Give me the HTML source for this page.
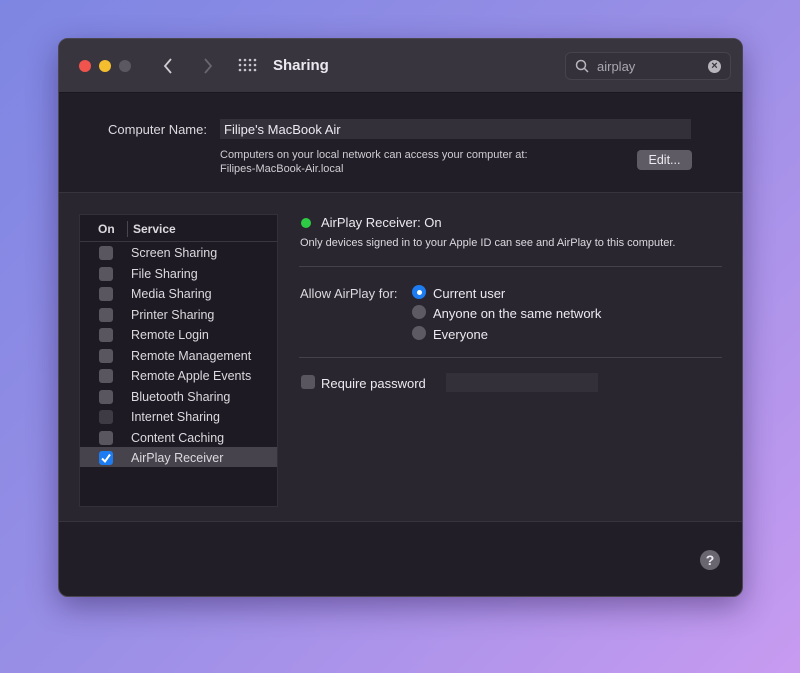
<!DOCTYPE html>
<html><head><style>
*{margin:0;padding:0;box-sizing:border-box}
body{width:800px;height:673px;overflow:hidden;font-family:"Liberation Sans",sans-serif;background:linear-gradient(135deg,#7d86e2 0%,#9a8fe6 50%,#c79bf0 100%);position:relative;color:#dcdadf}
.win{position:absolute;left:58px;top:38px;width:685px;height:559px;border-radius:10px;background:#221e28;overflow:hidden;box-shadow:0 10px 30px rgba(40,20,80,.45);border:1px solid #4a4650}
.tb{position:absolute;left:0;top:0;width:100%;height:54px;background:#39353f;border-bottom:1px solid #1a171e}
.dot{position:absolute;top:21px;width:12px;height:12px;border-radius:50%}
.abs{position:absolute}
.mid{position:absolute;left:0;top:153px;width:100%;height:330px;background:#2a2630;border-top:1px solid #38343d;border-bottom:1px solid #38343d}
.list{position:absolute;left:20px;top:21px;width:199px;height:293px;background:#1e1a23;border:1px solid #34303a}
.row{position:absolute;left:0;width:197px;height:20px;font-size:12.5px}
.cb{position:absolute;left:19px;top:4px;width:14px;height:14px;border-radius:3px;background:#5a5660}
.row span{position:absolute;left:51px;top:4px}
.rad{position:absolute;width:14px;height:14px;border-radius:50%;background:#5e5a64}
</style></head><body>
<div class="win">
 <div class="tb">
  <div class="dot" style="left:20px;background:#f0544c"></div>
  <div class="dot" style="left:40px;background:#f5be2e"></div>
  <div class="dot" style="left:60px;background:#5c5862"></div>
  <svg class="abs" style="left:103px;top:18px" width="12" height="18"><path d="M9 2L3 9l6 7" stroke="#cfcdd2" stroke-width="1.8" fill="none"/></svg>
  <svg class="abs" style="left:143px;top:18px" width="12" height="18"><path d="M3 2l6 7-6 7" stroke="#6a6670" stroke-width="1.8" fill="none"/></svg>
  <svg class="abs" style="left:179px;top:19px" width="20" height="16" fill="#c8c6cc"><circle cx="2" cy="2" r="1.3"/><circle cx="7" cy="2" r="1.3"/><circle cx="12" cy="2" r="1.3"/><circle cx="17" cy="2" r="1.3"/><circle cx="2" cy="7" r="1.3"/><circle cx="7" cy="7" r="1.3"/><circle cx="12" cy="7" r="1.3"/><circle cx="17" cy="7" r="1.3"/><circle cx="2" cy="12" r="1.3"/><circle cx="7" cy="12" r="1.3"/><circle cx="12" cy="12" r="1.3"/><circle cx="17" cy="12" r="1.3"/></svg>
  <div class="abs" style="left:214px;top:18px;font-size:15px;font-weight:bold;color:#eceaf0">Sharing</div>
  <div class="abs" style="left:506px;top:13px;width:166px;height:28px;border-radius:6px;background:#35313b;border:1px solid #47434d"></div>
  <svg class="abs" style="left:516px;top:20px" width="14" height="14"><circle cx="6" cy="6" r="4.5" stroke="#b8b6bc" stroke-width="1.5" fill="none"/><path d="M9.5 9.5L13 13" stroke="#b8b6bc" stroke-width="1.5"/></svg>
  <div class="abs" style="left:538px;top:20px;font-size:13px;color:#a9a7ae">airplay</div>
  <div class="abs" style="left:649px;top:21px;width:13px;height:13px;border-radius:50%;background:#b8b6bc;color:#39353f;font-size:11px;line-height:13px;text-align:center;font-weight:bold">×</div>
 </div>
 <div class="abs" style="left:49px;top:83px;font-size:13px;color:#dcdadf">Computer Name:</div>
 <div class="abs" style="left:161px;top:80px;width:471px;height:20px;background:#34303a"></div>
 <div class="abs" style="left:165px;top:83px;font-size:13px;color:#eceaf0">Filipe's MacBook Air</div>
 <div class="abs" style="left:161px;top:109px;font-size:11px;line-height:14px;color:#cfcdd2">Computers on your local network can access your computer at:<br>Filipes-MacBook-Air.local</div>
 <div class="abs" style="left:578px;top:111px;width:55px;height:20px;border-radius:4px;background:#5f5b65;font-size:12.5px;text-align:center;line-height:20px;color:#eceaf0">Edit...</div>
 <div class="mid">
  <div class="list">
   <div class="abs" style="left:0;top:0;width:197px;height:27px;border-bottom:1px solid #3a3640"></div>
   <div class="abs" style="left:18px;top:7px;font-size:12px;font-weight:bold">On</div>
   <div class="abs" style="left:47px;top:6px;width:1px;height:16px;background:#4a4650"></div>
   <div class="abs" style="left:53px;top:7px;font-size:12px;font-weight:bold">Service</div>
   <div class="row" style="top:27px"><div class="cb"></div><span>Screen Sharing</span></div>
   <div class="row" style="top:47.5px"><div class="cb"></div><span>File Sharing</span></div>
   <div class="row" style="top:68px"><div class="cb"></div><span>Media Sharing</span></div>
   <div class="row" style="top:88.5px"><div class="cb"></div><span>Printer Sharing</span></div>
   <div class="row" style="top:109px"><div class="cb"></div><span>Remote Login</span></div>
   <div class="row" style="top:129.5px"><div class="cb"></div><span>Remote Management</span></div>
   <div class="row" style="top:150px"><div class="cb"></div><span>Remote Apple Events</span></div>
   <div class="row" style="top:170.5px"><div class="cb"></div><span>Bluetooth Sharing</span></div>
   <div class="row" style="top:191px"><div class="cb" style="background:#3f3b45"></div><span>Internet Sharing</span></div>
   <div class="row" style="top:211.5px"><div class="cb"></div><span>Content Caching</span></div>
   <div class="row" style="top:232px;background:#47434d"><div class="cb" style="background:#1d7cf2"><svg width="14" height="14" style="position:absolute;left:0;top:0"><path d="M3 7.5l3 3 5-7" stroke="#fff" stroke-width="2" fill="none"/></svg></div><span>AirPlay Receiver</span></div>
  </div>
  <div class="abs" style="left:242px;top:25px;width:10px;height:10px;border-radius:50%;background:#2ecb45"></div>
  <div class="abs" style="left:262px;top:22px;font-size:13px;color:#eceaf0">AirPlay Receiver: On</div>
  <div class="abs" style="left:241px;top:44px;font-size:11px;color:#dcdadf">Only devices signed in to your Apple ID can see and AirPlay to this computer.</div>
  <div class="abs" style="left:240px;top:73px;width:423px;height:1px;background:#45414b"></div>
  <div class="abs" style="left:241px;top:93px;font-size:13px">Allow AirPlay for:</div>
  <div class="rad" style="left:353px;top:92px;background:#1d7cf2"><div style="position:absolute;left:4.5px;top:4.5px;width:5px;height:5px;border-radius:50%;background:#fff"></div></div>
  <div class="abs" style="left:374px;top:93px;font-size:13px;color:#eceaf0">Current user</div>
  <div class="rad" style="left:353px;top:112px"></div>
  <div class="abs" style="left:374px;top:113px;font-size:13px;color:#eceaf0">Anyone on the same network</div>
  <div class="rad" style="left:353px;top:133px"></div>
  <div class="abs" style="left:374px;top:134px;font-size:13px;color:#eceaf0">Everyone</div>
  <div class="abs" style="left:240px;top:164px;width:423px;height:1px;background:#45414b"></div>
  <div class="abs" style="left:242px;top:182px;width:14px;height:14px;border-radius:3px;background:#5a5660"></div>
  <div class="abs" style="left:262px;top:183px;font-size:13px;color:#eceaf0">Require password</div>
  <div class="abs" style="left:387px;top:180px;width:152px;height:19px;background:#34303a"></div>
 </div>
 <div class="abs" style="left:641px;top:511px;width:20px;height:20px;border-radius:50%;background:#6a6670;color:#eceaf0;font-size:14px;font-weight:bold;text-align:center;line-height:20px">?</div>
</div>
</body></html>
